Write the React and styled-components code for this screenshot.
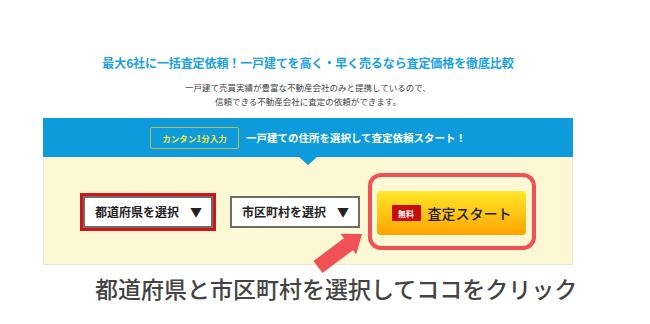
import styled, { createGlobalStyle } from 'styled-components'

const GlobalStyle = createGlobalStyle`
body{
  margin:0;
  background:#fff;
  font-family:"Noto Sans CJK JP","Noto Sans",sans-serif;
}
`

const Page = styled.div`
width:650px;
height:324px;
padding-top:54px;
box-sizing:border-box;
`
const Column = styled.div`
width:530px;
margin-left:43px;
display:flex;
flex-direction:column;
align-items:center;
`
const Headline = styled.h1`
margin:0;
font-size:12px;
line-height:17px;
font-weight:700;
color:#1ba0e1;
letter-spacing:-0.1px;
`
const Lead = styled.p`
margin:9px 0 10px;
font-size:8.5px;
line-height:14px;
color:#444;
text-align:center;
`
const Panel = styled.div`
position:relative;
width:100%;
`
const Band = styled.div`
position:relative;
height:39px;
background:#0d9bdc;
display:flex;
align-items:center;
justify-content:center;
gap:7px;
&::after{
  content:"";
  position:absolute;
  left:50%;
  bottom:-8px;
  margin-left:-9px;
  border-left:9px solid transparent;
  border-right:9px solid transparent;
  border-top:8px solid #0d9bdc;
}
`
const Badge = styled.span`
width:89px;
height:22px;
box-sizing:border-box;
border:1.5px solid #b7c04a;
border-radius:2px;
display:flex;
align-items:center;
justify-content:center;
font-size:8.5px;
font-weight:700;
color:#f4e637;
`
const BandTitle = styled.span`
font-size:10.5px;
font-weight:700;
color:#fff;
`
const Body = styled.div`
height:108px;
background:#fcf8d3;
border:1px solid #e8e6d6;
border-top:none;
box-sizing:border-box;
display:flex;
align-items:center;
justify-content:center;
padding-top:2px;
`
const Highlight = styled.div`
border:3px solid #cf1515;
margin-right:14px;
`
const Select = styled.div`
width:130px;
height:32px;
box-sizing:border-box;
background:#fff;
border:2px solid #6d6d6d;
display:flex;
align-items:center;
justify-content:space-between;
padding:0 9px 0 10px;
font-size:12px;
font-weight:700;
color:#222;
`
const Arrow = styled.span`
font-size:12px;
`
const CallOut = styled.div`
margin-left:8px;
border:4px solid #ef5156;
border-radius:13px;
padding:14px 6px 11px 5px;
`
const StartButton = styled.button`
width:149px;
height:44px;
border:none;
border-radius:4px;
background:linear-gradient(#ffe82a,#ffa300);
display:flex;
align-items:center;
justify-content:center;
gap:7px;
padding:0;
font-family:inherit;
cursor:pointer;
`
const Free = styled.span`
background:#c80b0b;
color:#fff;
font-size:8px;
font-weight:700;
width:29px;
height:16px;
display:flex;
align-items:center;
justify-content:center;
border-radius:1px;
`
const StartLabel = styled.span`
font-size:14px;
font-weight:500;
color:#1e1e1e;
`
const PointerArrow = styled.svg`
position:absolute;
left:257px;
top:108px;
`
const Caption = styled.p`
margin:7px 0 0 52px;
font-size:23px;
line-height:32px;
font-weight:500;
color:#444;
align-self:flex-start;
white-space:nowrap;
`

export default function App() {
  return (
    <Page>
      <GlobalStyle />
      <Column>
        <Headline>最大6社に一括査定依頼！一戸建てを高く・早く売るなら査定価格を徹底比較</Headline>
        <Lead>
          一戸建て売買実績が豊富な不動産会社のみと提携しているので、<br />
          信頼できる不動産会社に査定の依頼ができます。
        </Lead>
        <Panel>
          <Band>
            <Badge>カンタン1分入力</Badge>
            <BandTitle>一戸建ての住所を選択して査定依頼スタート！</BandTitle>
          </Band>
          <Body>
            <Highlight>
              <Select>都道府県を選択<Arrow>▼</Arrow></Select>
            </Highlight>
            <Select>市区町村を選択<Arrow>▼</Arrow></Select>
            <CallOut>
              <StartButton>
                <Free>無料</Free>
                <StartLabel>査定スタート</StartLabel>
              </StartButton>
            </CallOut>
          </Body>
          <PointerArrow width="70" height="55" viewBox="0 0 70 55">
            <polygon
              fill="#ef5156"
              points="13.5,35 43.9,12.2 40.6,7.8 62,8 56.2,28.6 52.9,24.2 22.5,47"
            />
          </PointerArrow>
        </Panel>
        <Caption>都道府県と市区町村を選択してココをクリック</Caption>
      </Column>
    </Page>
  )
}
